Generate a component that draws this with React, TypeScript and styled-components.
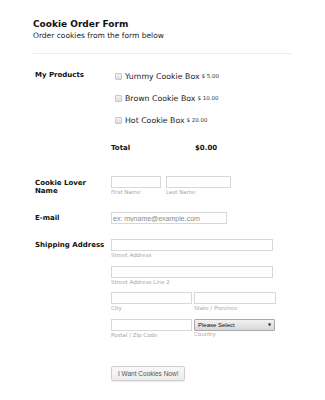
import React from "react";
import styled, { createGlobalStyle } from "styled-components";

const GlobalStyle = createGlobalStyle`
  body {
    margin: 0;
    background: #ffffff;
    font-family: "DejaVu Sans", Verdana, sans-serif;
    color: #111;
  }
`;

const Page = styled.div`
  width: 325px;
  height: 400px;
  box-sizing: border-box;
  padding: 18px 33px 0 33px;
`;

const Header = styled.div`
  border-bottom: 1px solid #ececec;
  padding-bottom: 12px;
`;

const Title = styled.h1`
  margin: 0;
  font-size: 9px;
  line-height: 12px;
  font-weight: bold;
  color: #111;
`;

const Subtitle = styled.div`
  margin-top: 1px;
  font-size: 7.5px;
  line-height: 10px;
  color: #222;
`;

const Row = styled.div<{ $top: number }>`
  display: grid;
  grid-template-columns: 78px 1fr;
  margin-top: ${(p) => p.$top}px;
`;

const Label = styled.div<{ $lh?: number; $pt?: number }>`
  padding-left: 2px;
  padding-top: ${(p) => p.$pt ?? 0}px;
  font-size: 7px;
  font-weight: bold;
  line-height: ${(p) => p.$lh ?? 12}px;
  color: #111;
`;

const Cell = styled.div`
  display: flex;
  align-items: flex-start;
`;

const Options = styled.div`
  display: flex;
  flex-direction: column;
`;

const Option = styled.label`
  display: flex;
  align-items: center;
  height: 22px;
  padding-left: 4px;
  font-size: 7.8px;
  color: #222;
`;

const Check = styled.span`
  width: 5px;
  height: 5px;
  border: 1px solid #c8c8c8;
  background: linear-gradient(#f4f4f4, #dcdcdc);
  margin-right: 3px;
  border-radius: 1px;
`;

const Price = styled.span`
  font-size: 5.5px;
  margin-left: 2px;
  color: #333;
`;

const TotalRow = styled.div`
  display: grid;
  grid-template-columns: 84px 1fr;
  font-size: 7px;
  font-weight: bold;
  line-height: 14px;
`;

const Fields = styled.div`
  display: flex;
  flex-direction: column;
  gap: 6px;
`;

const FieldLine = styled.div<{ $gap?: number }>`
  display: flex;
  gap: ${(p) => p.$gap ?? 2}px;
`;

const Field = styled.div`
  display: flex;
  flex-direction: column;
`;

const Input = styled.input<{ $w: number }>`
  display: block;
  box-sizing: border-box;
  width: ${(p) => p.$w}px;
  height: 12px;
  margin: 0;
  padding: 0 1px;
  border: 1px solid #d8d8d8;
  background: #fff;
  font-family: "Liberation Sans", Arial, sans-serif;
  font-size: 7px;
  outline: none;
  &::placeholder {
    color: #8a8a8a;
  }
`;

const Sub = styled.span<{ $lh?: number }>`
  font-size: 5.5px;
  line-height: ${(p) => p.$lh ?? 8.5}px;
  color: #a8a8a8;
`;

const SelectWrap = styled.div`
  position: relative;
  width: 81px;
  height: 12px;
`;

const Select = styled.select`
  display: block;
  appearance: none;
  box-sizing: border-box;
  width: 100%;
  height: 100%;
  margin: 0;
  padding: 0 3px;
  border: 1px solid #a8a8a8;
  border-radius: 1px;
  background: linear-gradient(#f2f2f2, #d8d8d8);
  font-family: "Liberation Sans", Arial, sans-serif;
  font-size: 6px;
  color: #111;
`;

const Arrow = styled.span`
  position: absolute;
  right: 4px;
  top: 3px;
  font-size: 4px;
  line-height: 6px;
  color: #222;
  pointer-events: none;
`;

const Button = styled.button`
  display: block;
  box-sizing: border-box;
  height: 15px;
  padding: 0 6px;
  border: 1px solid #cfcfcf;
  border-radius: 2px;
  background: linear-gradient(#f8f8f8, #ececec);
  box-shadow: 0 1px 1px rgba(0, 0, 0, 0.08);
  font-family: "Liberation Sans", Arial, sans-serif;
  font-size: 6.5px;
  color: #555;
`;

const products = [
  { name: "Yummy Cookie Box", price: "$ 5.00" },
  { name: "Brown Cookie Box", price: "$ 10.00" },
  { name: "Hot Cookie Box", price: "$ 20.00" },
];

export default function App() {
  return (
    <>
      <GlobalStyle />
      <Page>
        <Header>
          <Title>Cookie Order Form</Title>
          <Subtitle>Order cookies from the form below</Subtitle>
        </Header>

        <Row $top={11}>
          <Label $lh={20}>My Products</Label>
          <Options>
            {products.map((p) => (
              <Option key={p.name}>
                <Check />
                {p.name}
                <Price>{p.price}</Price>
              </Option>
            ))}
          </Options>
        </Row>

        <Row $top={10}>
          <div />
          <TotalRow>
            <span>Total</span>
            <span>$0.00</span>
          </TotalRow>
        </Row>

        <Row $top={21}>
          <Label $lh={8} $pt={3}>
            Cookie Lover
            <br />
            Name
          </Label>
          <FieldLine $gap={5}>
            <Field>
              <Input $w={50} />
              <Sub $lh={9}>First Name</Sub>
            </Field>
            <Field>
              <Input $w={65} />
              <Sub $lh={9}>Last Name</Sub>
            </Field>
          </FieldLine>
        </Row>

        <Row $top={15}>
          <Label>E-mail</Label>
          <Cell>
            <Input $w={116} placeholder="ex: myname@example.com" />
          </Cell>
        </Row>

        <Row $top={15}>
          <Label>Shipping Address</Label>
          <Fields>
            <Field>
              <Input $w={162} />
              <Sub>Street Address</Sub>
            </Field>
            <Field>
              <Input $w={162} />
              <Sub>Street Address Line 2</Sub>
            </Field>
            <FieldLine>
              <Field>
                <Input $w={81} />
                <Sub>City</Sub>
              </Field>
              <Field>
                <Input $w={82} />
                <Sub>State / Province</Sub>
              </Field>
            </FieldLine>
            <FieldLine>
              <Field>
                <Input $w={81} />
                <Sub>Postal / Zip Code</Sub>
              </Field>
              <Field>
                <SelectWrap>
                  <Select defaultValue="">
                    <option value="">Please Select</option>
                  </Select>
                  <Arrow>▼</Arrow>
                </SelectWrap>
                <Sub $lh={7}>Country</Sub>
              </Field>
            </FieldLine>
          </Fields>
        </Row>

        <Row $top={27}>
          <div />
          <Cell>
            <Button>I Want Cookies Now!</Button>
          </Cell>
        </Row>
      </Page>
    </>
  );
}
